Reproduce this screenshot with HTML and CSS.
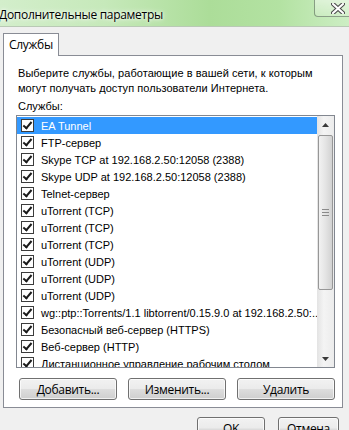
FILE: index.html
```html
<!DOCTYPE html>
<html lang="ru">
<head>
    <meta charset="UTF-8">
    <meta name="viewport" content="width=device-width, initial-scale=1.0">
    <title>Дополнительные параметры</title>
    <link rel="stylesheet" href="styles.css">
</head>
<body>

<div class="window">
    <div class="titlebar">
        <span class="title">Дополнительные параметры</span>
        <div class="close-btn">
            <svg width="14" height="11" viewBox="0 0 14 11">
                <path d="M2 1 L12 10 M12 1 L2 10" stroke="#4a4a4a" stroke-width="4.2" stroke-linecap="round"/>
                <path d="M2 1 L12 10 M12 1 L2 10" stroke="#ffffff" stroke-width="2.2" stroke-linecap="round"/>
            </svg>
        </div>
    </div>

    <div class="client">
        <div class="tabs">
            <div class="tab">Службы</div>
        </div>

        <div class="panel">
            <p class="hint">Выберите службы, работающие в вашей сети, к которым<br>могут получать доступ пользователи Интернета.</p>
            <div class="list-label">Службы:</div>

            <div class="listbox">
                <ul class="rows">
                    <li class="selected"><span class="check"></span>EA Tunnel</li>
                    <li><span class="check"></span>FTP-сервер</li>
                    <li><span class="check"></span>Skype TCP at 192.168.2.50:12058 (2388)</li>
                    <li><span class="check"></span>Skype UDP at 192.168.2.50:12058 (2388)</li>
                    <li><span class="check"></span>Telnet-сервер</li>
                    <li><span class="check"></span>uTorrent (TCP)</li>
                    <li><span class="check"></span>uTorrent (TCP)</li>
                    <li><span class="check"></span>uTorrent (TCP)</li>
                    <li><span class="check"></span>uTorrent (UDP)</li>
                    <li><span class="check"></span>uTorrent (UDP)</li>
                    <li><span class="check"></span>uTorrent (UDP)</li>
                    <li><span class="check"></span>wg::ptp::Torrents/1.1 libtorrent/0.15.9.0 at 192.168.2.50:...</li>
                    <li><span class="check"></span>Безопасный веб-сервер (HTTPS)</li>
                    <li><span class="check"></span>Веб-сервер (HTTP)</li>
                    <li><span class="check"></span>Дистанционное управление рабочим столом</li>
                </ul>
                <div class="scrollbar">
                    <div class="arrow">
                        <svg width="7" height="4" viewBox="0 0 7 4"><path d="M0 4 L3.5 0 L7 4 Z" fill="#3a3a3a"/></svg>
                    </div>
                    <div class="track">
                        <div class="thumb">
                            <span class="grip"></span>
                        </div>
                    </div>
                    <div class="arrow">
                        <svg width="7" height="4" viewBox="0 0 7 4"><path d="M0 0 L3.5 4 L7 0 Z" fill="#3a3a3a"/></svg>
                    </div>
                </div>
            </div>

            <div class="actions">
                <button class="btn">Добавить...</button>
                <button class="btn">Изменить...</button>
                <button class="btn">Удалить</button>
            </div>
        </div>

        <div class="footer">
            <button class="btn btn-ok">OK</button>
            <button class="btn btn-cancel">Отмена</button>
        </div>
    </div>
</div>

</body>
</html>
```

FILE: styles.css
```css
body {
    margin: 0;
    font-family: "Open Sans", "Noto Sans", sans-serif;
    font-size: 12px;
    color: #000;
    background: #f0f0f0;
}
.window {
    width: 349px;
    height: 430px;
    overflow: hidden;
    display: flex;
    flex-direction: column;
}
.titlebar {
    height: 27px;
    flex: none;
    display: flex;
    align-items: flex-start;
    overflow: hidden;
    background: linear-gradient(90deg, #d3eecb 0%, #c6e9ba 30%, #acdd99 60%, #b3e2a2 80%, #cdeec4 100%);
    border-bottom: 1px solid #b9c9b5;
    box-sizing: border-box;
}
.title {
    margin-top: 6px;
    margin-left: -1px;
    letter-spacing: -0.3px;
    text-shadow: 0 0 6px #ffffff, 0 0 3px #ffffff;
}
.close-btn {
    margin-left: auto;
    margin-right: -6px;
    margin-top: -1px;
    width: 41px;
    height: 18px;
    border: 1px solid rgba(70, 90, 70, 0.55);
    border-radius: 0 0 4px 4px;
    background: linear-gradient(180deg, rgba(255,255,255,0.45), rgba(255,255,255,0.15));
    display: flex;
    align-items: center;
    justify-content: flex-start;
    padding-left: 16px;
    box-sizing: border-box;
}
.client {
    flex: 1;
    background: #f0f0f0;
    display: flex;
    flex-direction: column;
}
.tabs {
    display: flex;
    margin-top: 6px;
    margin-left: 3px;
}
.tab {
    height: 23px;
    box-sizing: border-box;
    padding: 2px 5px 0;
    border: 1px solid #898c95;
    border-bottom: none;
    background: #ffffff;
    margin-bottom: -1px;
    position: relative;
    z-index: 1;
    letter-spacing: -0.3px;
}
.panel {
    margin: 0 6px 0 3px;
    height: 353px;
    box-sizing: border-box;
    border: 1px solid #898c95;
    background: #ffffff;
    padding: 10px 0 0 12px;
}
.hint {
    margin: 0;
    padding-left: 2px;
    line-height: 15px;
    white-space: nowrap;
    font-family: "Liberation Sans", Arial, sans-serif;
    font-size: 11px;
    letter-spacing: 0.05px;
}
.list-label {
    margin-top: 3px;
    padding-left: 2px;
    line-height: 15px;
    font-family: "Liberation Sans", Arial, sans-serif;
    font-size: 11px;
}
.listbox {
    margin-top: 1px;
    width: 319px;
    height: 253px;
    box-sizing: border-box;
    border: 1px solid #828790;
    display: flex;
    overflow: hidden;
}
.rows {
    list-style: none;
    margin: 0;
    padding: 1px 0 0;
    flex: 1;
    overflow: hidden;
    font-family: "Liberation Sans", Arial, sans-serif;
    font-size: 11px;
}
.rows li {
    height: 17px;
    display: flex;
    align-items: center;
    white-space: nowrap;
    padding-left: 4px;
}
.rows li.selected {
    background: #3399ff;
    color: #ffffff;
}
.check {
    width: 13px;
    height: 13px;
    box-sizing: border-box;
    border: 1px solid #3c3c3c;
    background: #ffffff;
    margin-right: 7px;
    flex: none;
    position: relative;
}
.check::after {
    content: "";
    position: absolute;
    left: 3px;
    top: 0px;
    width: 3px;
    height: 7px;
    border: solid #1a1a1a;
    border-width: 0 2px 2px 0;
    transform: rotate(40deg);
}
.scrollbar {
    width: 17px;
    flex: none;
    display: flex;
    flex-direction: column;
    background: linear-gradient(90deg, #e3e3e3, #f4f4f4 40%, #ececec);
}
.arrow {
    height: 17px;
    display: flex;
    align-items: center;
    justify-content: center;
}
.track {
    flex: 1;
    padding: 2px 1px 0 1px;
}
.thumb {
    height: 155px;
    box-sizing: border-box;
    border: 1px solid #979797;
    border-radius: 2px;
    background: linear-gradient(90deg, #f2f2f2, #e4e4e4 50%, #d2d2d2);
    display: flex;
    align-items: center;
    justify-content: center;
}
.grip {
    width: 7px;
    height: 5px;
    border-top: 1px solid #8a8a8a;
    border-bottom: 1px solid #8a8a8a;
    background: linear-gradient(180deg, transparent 2px, #8a8a8a 2px, #8a8a8a 3px, transparent 3px);
}
.actions {
    display: flex;
    gap: 11px;
    margin-top: 10px;
    padding-left: 3px;
}
.btn {
    height: 22px;
    width: 98px;
    padding: 0;
    font-family: "Open Sans", "Noto Sans", sans-serif;
    font-size: 12px;
    letter-spacing: -0.3px;
    color: #000;
    border: 1px solid #707070;
    border-radius: 3px;
    background: linear-gradient(180deg, #f2f2f2 0%, #ebebeb 48%, #dddddd 52%, #cfcfcf 100%);
    box-shadow: inset 0 0 0 1px rgba(255, 255, 255, 0.7);
}
.footer {
    display: flex;
    margin-top: 9px;
    padding-left: 197px;
    gap: 13px;
}
.btn-ok {
    width: 68px;
    height: 23px;
}
.btn-cancel {
    width: 61px;
    height: 23px;
}
```
